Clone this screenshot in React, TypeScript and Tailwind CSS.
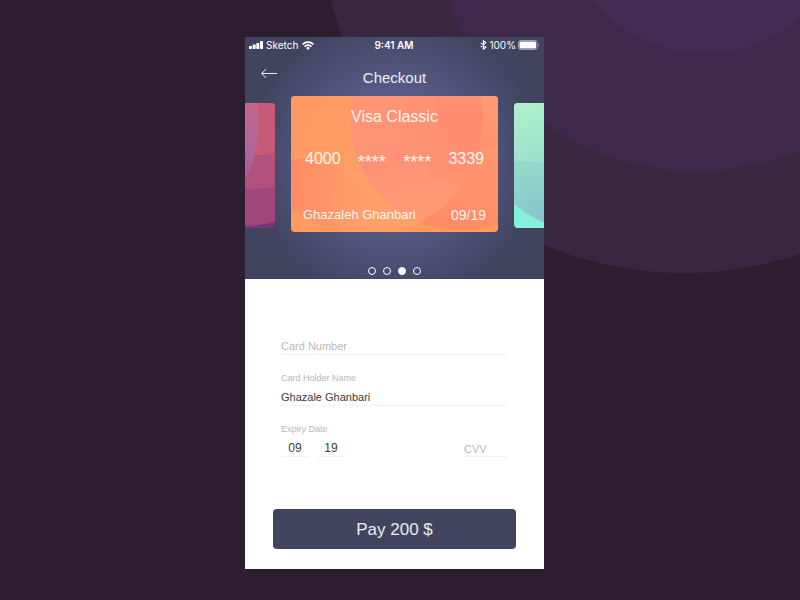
import React from "react";

function Backdrop() {
  return (
    <svg className="absolute right-0 top-0 h-[600px] w-[800px]" viewBox="0 0 800 600" aria-hidden="true">
      <circle cx="684" cy="-92" r="365" fill="#392742" />
      <circle cx="696" cy="-94" r="265" fill="#3e294c" />
      <circle cx="705" cy="-90" r="144" fill="#422c52" />
    </svg>
  );
}

function StatusBar() {
  return (
    <div className="grid h-4 grid-cols-3 items-center pl-1 pr-[5px] font-[Inter,sans-serif] text-[10px] leading-4 text-white">
      <div className="flex items-center gap-[3px]">
        <svg className="h-2 w-[14px]" viewBox="0 0 14 8" fill="currentColor" aria-hidden="true">
          <rect x="0" y="5" width="3" height="3" rx="0.7" />
          <rect x="3.7" y="3.5" width="3" height="4.5" rx="0.7" />
          <rect x="7.3" y="2" width="3" height="6" rx="0.7" />
          <rect x="11" y="0" width="3" height="8" rx="0.7" />
        </svg>
        <span>Sketch</span>
        <svg className="ml-px h-[9px] w-3" viewBox="0 0 12 9" fill="none" stroke="currentColor" strokeWidth="1.7" aria-hidden="true">
          <path d="M0.6 3.4a7.7 7.7 0 0 1 10.8 0" />
          <path d="M2.6 5.6a4.8 4.8 0 0 1 6.8 0" />
          <path d="M6 9 4.1 7a2.7 2.7 0 0 1 3.8 0Z" fill="currentColor" stroke="none" />
        </svg>
      </div>
      <span className="text-center font-semibold">9:41 AM</span>
      <div className="flex items-center justify-end gap-[2px]">
        <svg className="h-[10px] w-[7px]" viewBox="0 0 7 10" fill="none" stroke="currentColor" strokeWidth="1.1" aria-hidden="true">
          <path d="M0.8 2.8 5.8 7.2 3.4 9.2V0.8L5.8 2.8 0.8 7.2" />
        </svg>
        <span>100%</span>
        <svg className="h-[10px] w-[21px]" viewBox="0 0 21 10" aria-hidden="true">
          <rect x="0.5" y="0.5" width="18.5" height="9" rx="2" fill="none" stroke="#9b9cae" />
          <rect x="1.5" y="1.5" width="16.5" height="7" rx="1" fill="#fff" />
          <path d="M19.8 3.4v3.2a1.7 1.7 0 0 0 0-3.2Z" fill="#9b9cae" />
        </svg>
      </div>
    </div>
  );
}

function SideCardLeft() {
  return (
    <div className="mt-[7px] h-[125px] w-[190px] shrink-0 overflow-hidden rounded">
      <svg className="h-full w-full" viewBox="0 0 190 125" aria-hidden="true">
        <defs>
          <linearGradient id="lilac" gradientUnits="userSpaceOnUse" x1="0" y1="0" x2="0" y2="80">
            <stop offset="0" stopColor="#c4688a" />
            <stop offset="0.6" stopColor="#b0669a" />
            <stop offset="1" stopColor="#a65a98" />
          </linearGradient>
        </defs>
        <rect width="190" height="125" fill="#74377f" />
        <circle cx="158" cy="7" r="116" fill="#9f477d" />
        <circle cx="170" cy="8" r="78" fill="#b1517c" />
        <circle cx="174" cy="5" r="47" fill="#c65a76" />
        <circle cx="59" cy="22" r="115" fill="url(#lilac)" />
      </svg>
    </div>
  );
}

function SideCardRight() {
  return (
    <div className="mt-[7px] h-[125px] w-[190px] shrink-0 overflow-hidden rounded">
      <svg className="h-full w-full" viewBox="0 0 190 125" aria-hidden="true">
        <defs>
          <linearGradient id="mint" gradientUnits="userSpaceOnUse" x1="0" y1="0" x2="40" y2="110">
            <stop offset="0" stopColor="#aff2cc" />
            <stop offset="1" stopColor="#8fcfcb" />
          </linearGradient>
          <linearGradient id="teal" gradientUnits="userSpaceOnUse" x1="0" y1="55" x2="20" y2="118">
            <stop offset="0" stopColor="#95dcc7" />
            <stop offset="1" stopColor="#88c5cd" />
          </linearGradient>
          <clipPath id="mintClip"><circle cx="72" cy="20" r="108" /></clipPath>
        </defs>
        <rect width="190" height="125" fill="#86f1da" />
        <circle cx="72" cy="20" r="108" fill="url(#mint)" />
        <circle cx="10" cy="158" r="100" fill="url(#teal)" clipPath="url(#mintClip)" />
      </svg>
    </div>
  );
}

function CardArt() {
  return (
    <svg className="absolute inset-0 h-full w-full" viewBox="0 0 207 136" preserveAspectRatio="none" aria-hidden="true">
      <defs>
        <linearGradient id="left" gradientUnits="userSpaceOnUse" x1="0" y1="0" x2="100" y2="60">
          <stop offset="0" stopColor="#ff9761" />
          <stop offset="1" stopColor="#ffa068" />
        </linearGradient>
        <linearGradient id="blob" gradientUnits="userSpaceOnUse" x1="0" y1="90" x2="80" y2="100">
          <stop offset="0" stopColor="#ff8b64" />
          <stop offset="1" stopColor="#ffa06a" />
        </linearGradient>
        <linearGradient id="big" gradientUnits="userSpaceOnUse" x1="0" y1="0" x2="0" y2="134">
          <stop offset="0" stopColor="#ffa77b" />
          <stop offset="1" stopColor="#ff8a64" />
        </linearGradient>
        <linearGradient id="overlap" gradientUnits="userSpaceOnUse" x1="100" y1="0" x2="130" y2="134">
          <stop offset="0" stopColor="#ff9475" />
          <stop offset="0.5" stopColor="#ff9275" />
          <stop offset="1" stopColor="#ff9d74" />
        </linearGradient>
        <clipPath id="bigClip"><circle cx="169" cy="25" r="109" /></clipPath>
        <clipPath id="leftClip"><circle cx="75" cy="22" r="117" /></clipPath>
      </defs>
      <rect width="207" height="136" fill="#ff9b5e" />
      <circle cx="75" cy="22" r="117" fill="url(#left)" />
      <circle cx="10" cy="136" r="73" fill="url(#blob)" clipPath="url(#leftClip)" />
      <circle cx="169" cy="25" r="109" fill="url(#big)" />
      <circle cx="75" cy="22" r="117" fill="url(#overlap)" clipPath="url(#bigClip)" />
      <circle cx="186" cy="21" r="72" fill="#ff7e6c" opacity="0.14" />
      <circle cx="184" cy="17" r="39" fill="#ff7e6c" opacity="0.16" />
    </svg>
  );
}

function PaymentCard() {
  return (
    <article className="relative h-[136px] w-[207px] shrink-0 overflow-hidden rounded text-white/90">
      <CardArt />
      <div className="relative flex h-full flex-col px-3 pt-3">
        <h2 className="text-center text-[16px] leading-[18px]">Visa Classic</h2>
        <div className="mt-6 flex h-[18px] justify-between px-[2px] text-[16px] leading-[18px]">
          <span>4000</span>
          <span className="pt-[3px] text-[18px]">****</span>
          <span className="pt-[3px] text-[18px]">****</span>
          <span>3339</span>
        </div>
        <div className="mt-auto flex items-center justify-between pb-2 text-[13px] leading-[18px]">
          <span>Ghazaleh Ghanbari</span>
          <span className="text-[14px]">09/19</span>
        </div>
      </div>
    </article>
  );
}

function Pager() {
  return (
    <div className="flex justify-center gap-[7px]">
      {[1, 2, 3, 4].map((n) => (
        <button
          key={n}
          type="button"
          aria-label={`Card ${n}`}
          className={n === 3 ? "size-2 rounded-full border border-white bg-white" : "size-2 rounded-full border border-white"}
        />
      ))}
    </div>
  );
}

const field = "block h-[18px] w-full border-b border-[#f3f3f3] bg-transparent text-[#3c3c3c] outline-none placeholder:text-[#b8b8b8] placeholder:opacity-100";
const caption = "block text-[9px] leading-3 text-[#b8b8b8]";

export default function App() {
  return (
    <div className="relative flex min-h-screen justify-center overflow-hidden bg-[#2c1e2f] pb-[31px] pr-[11px] pt-[37px] font-['Liberation_Sans',Arial,sans-serif]">
      <Backdrop />
      <main className="relative flex w-full max-w-[299px] flex-col self-start overflow-hidden bg-white">
        <header className="flex flex-col bg-[radial-gradient(circle_at_50%_50%,#5f648f_0px,#595e88_60px,#4d5176_100px,#41445f_145px)] pb-1">
          <StatusBar />
          <div className="mt-[15px] grid grid-cols-3 items-start px-4">
            <button type="button" aria-label="Back" className="w-4 text-white">
              <svg className="h-[11px] w-4" viewBox="0 0 16 11" fill="none" stroke="currentColor" strokeWidth="0.9" aria-hidden="true">
                <path d="M16 5.5H0.7M5 1 0.7 5.5 5 10" />
              </svg>
            </button>
            <h1 className="text-center text-[15px] leading-5 text-white/90">Checkout</h1>
          </div>
          <section aria-label="Your cards" className="mt-2 flex items-start justify-center gap-4 overflow-hidden">
            <SideCardLeft />
            <PaymentCard />
            <SideCardRight />
          </section>
          <div className="mt-[35px]">
            <Pager />
          </div>
        </header>

        <form className="flex flex-col px-7 pb-5 pt-[58px]" onSubmit={(e) => e.preventDefault()}>
          <div className="px-2">
            <input aria-label="Card Number" placeholder="Card Number" className={`${field} text-[11px]`} />
            <label htmlFor="holder" className={`${caption} mt-[17px]`}>Card Holder Name</label>
            <input id="holder" defaultValue="Ghazale Ghanbari" className={`${field} mt-1 text-[11px]`} />
            <label htmlFor="month" className={`${caption} mt-[17px]`}>Expiry Date</label>
            <div className="mt-1 flex">
              <div className="w-7">
                <input id="month" defaultValue="09" className={`${field} text-center text-[12px]`} />
              </div>
              <div className="ml-2 w-7">
                <input aria-label="Expiry year" defaultValue="19" className={`${field} text-center text-[12px]`} />
              </div>
              <div className="ml-auto w-11">
                <input aria-label="CVV" placeholder="CVV" className={`${field} pt-[2px] text-[11px]`} />
              </div>
            </div>
          </div>
          <button type="submit" className="mt-[52px] h-10 rounded bg-[#41445f] pt-px text-[17px] text-white/90">
            Pay 200 $
          </button>
        </form>
      </main>
    </div>
  );
}
